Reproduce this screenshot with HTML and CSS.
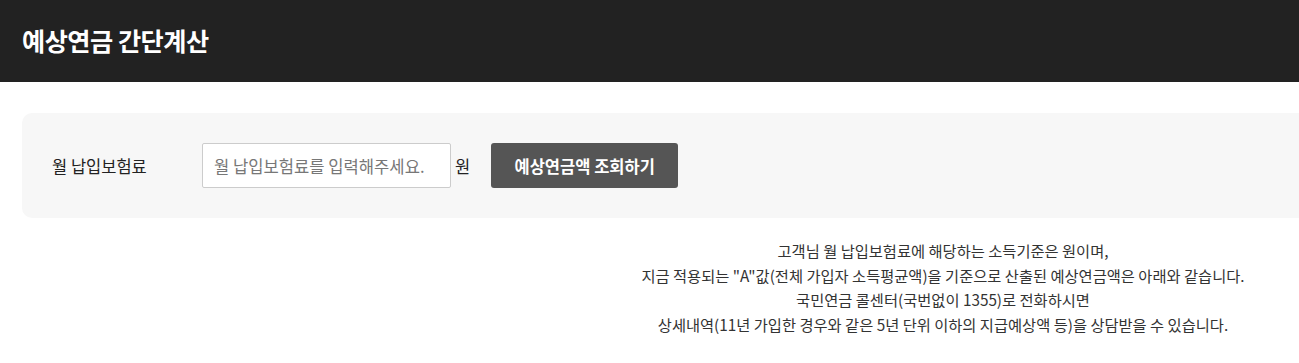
FILE: index.html
```html
<!DOCTYPE html>
<html>
<head>
  <title>예상연금 간단계산</title>
  <link rel="stylesheet" href="styles.css">
</head>
<body>
  <div class="header">
    <h1>예상연금 간단계산</h1>
  </div>

  <div class="page">
    <div class="calc-box">
      <label class="calc-label" for="premium">월 납입보험료</label>
      <input class="calc-input" id="premium" type="text" placeholder="월 납입보험료를 입력해주세요.">
      <span class="calc-unit">원</span>
      <button class="calc-btn" type="button">예상연금액 조회하기</button>
    </div>

    <div class="notice">
      <p>고객님 월 납입보험료에 해당하는 소득기준은 원이며,</p>
      <p>지금 적용되는 "A"값(전체 가입자 소득평균액)을 기준으로 산출된 예상연금액은 아래와 같습니다.</p>
      <p>국민연금 콜센터(국번없이 1355)로 전화하시면</p>
      <p>상세내역(11년 가입한 경우와 같은 5년 단위 이하의 지급예상액 등)을 상담받을 수 있습니다.</p>
    </div>
  </div>
</body>
</html>
```

FILE: styles.css
```css
html, body {
  overflow-x: hidden;
}

body {
  margin: 0;
  padding: 0;
  background: #ffffff;
  color: #222222;
  font-family: "Noto Sans CJK KR", "Noto Sans", sans-serif;
}

.header {
  background-color: #222222;
  height: 82px;
  display: flex;
  align-items: center;
  padding: 0 22px;
}

.header h1 {
  margin: 0;
  color: #ffffff;
  font-size: 25.2px;
  font-weight: 700;
  letter-spacing: -0.5px;
  line-height: 1;
}

.page {
  width: 1842px;
  padding: 31px 22px 0;
}

.calc-box {
  background-color: #f7f7f7;
  border-radius: 10px;
  height: 105px;
  display: flex;
  align-items: center;
  padding: 0 30px;
}

.calc-label {
  width: 150px;
  font-size: 16.5px;
  color: #222222;
}

.calc-input {
  box-sizing: border-box;
  width: 249px;
  height: 45px;
  border: 1px solid #cccccc;
  border-radius: 2px;
  background: #ffffff;
  padding: 0 11px;
  font-family: inherit;
  font-size: 16.6px;
  color: #222222;
}

.calc-input::placeholder {
  color: #777777;
}

.calc-unit {
  font-size: 16.5px;
  margin: 0 21px 0 4px;
}

.calc-btn {
  width: 187px;
  height: 45px;
  border: none;
  border-radius: 3px;
  background-color: #555555;
  color: #ffffff;
  font-family: inherit;
  font-size: 16.5px;
  font-weight: 700;
}

.notice {
  padding-top: 20px;
  text-align: center;
  font-size: 15.3px;
  color: #333333;
}

.notice p {
  margin: 0;
  line-height: 24.7px;
}
```
